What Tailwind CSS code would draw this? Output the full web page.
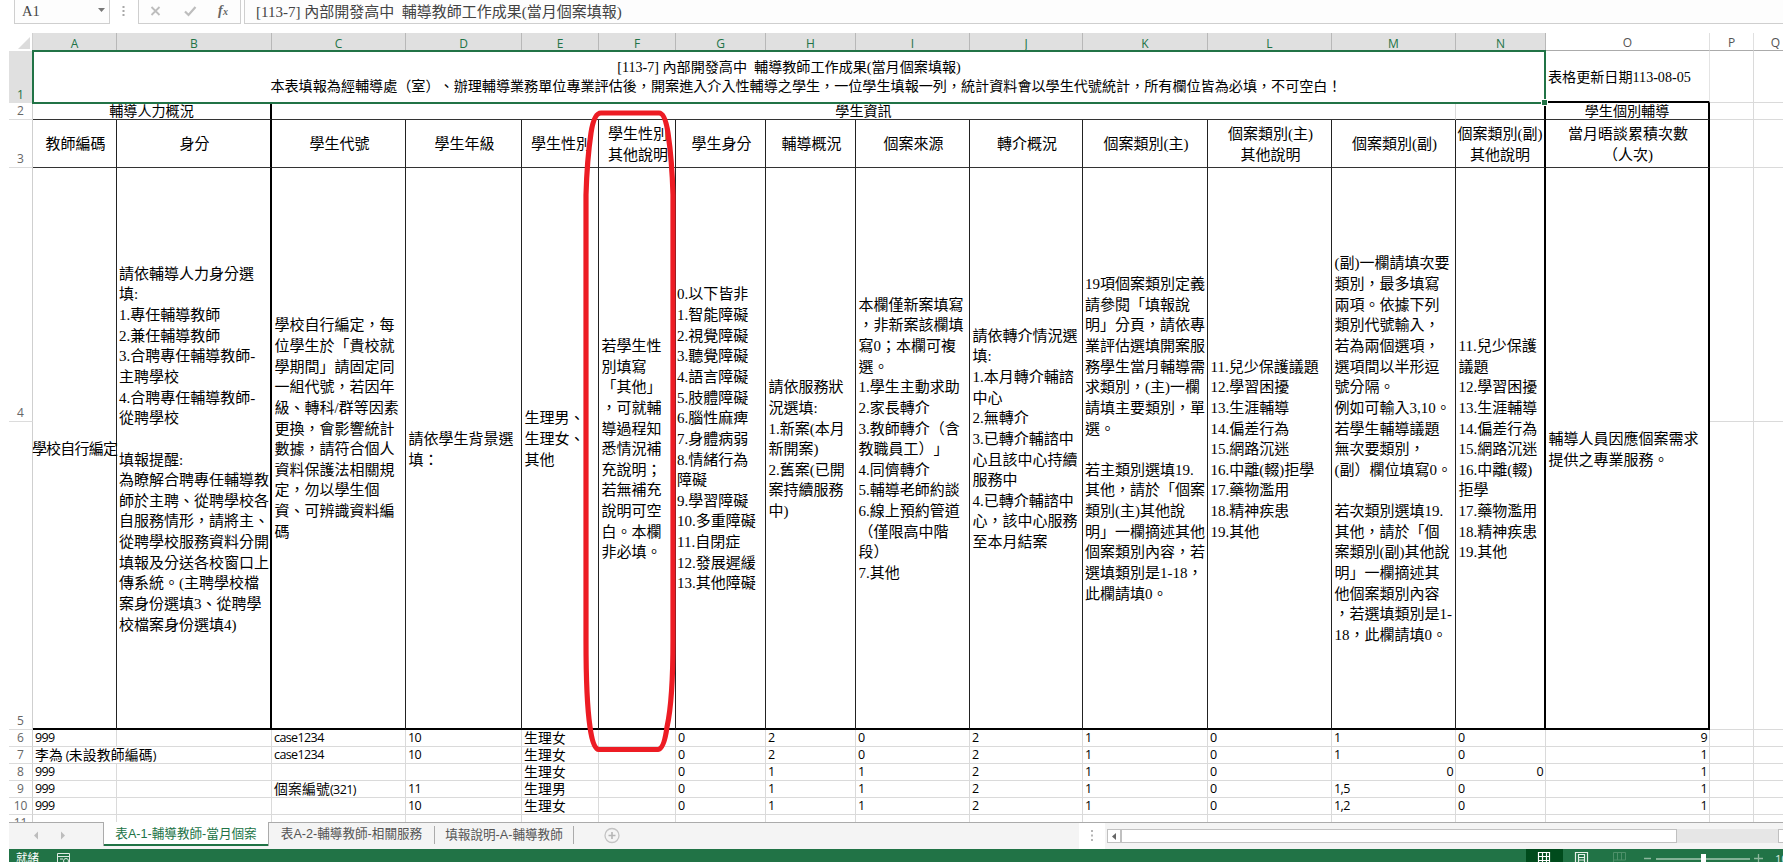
<!DOCTYPE html>
<html lang="zh-Hant">
<head>
<meta charset="utf-8">
<title>輔導教師工作成果</title>
<script src="https://cdn.jsdelivr.net/npm/@tailwindcss/browser@4"></script>
</head>
<body class="w-[1783px] h-[862px] overflow-hidden bg-white">
<div class="relative flex flex-col w-[1783px] h-[862px] overflow-hidden text-black font-['Liberation_Serif','Noto_Sans_CJK_TC',serif] [text-spacing-trim:space-all]">

  <!-- formula bar -->
  <div class="flex h-6 shrink-0 pl-[14px] text-[#444]">
    <div class="flex w-[96px] h-6 items-center justify-between border border-t-0 border-[#cfcfcf] bg-[#fdfdfd] pl-[7px] pr-1">
      <span class="text-[14.5px]">A1</span>
      <svg class="w-[7px] h-[4px] mb-1" viewBox="0 0 7 4"><path d="M0 0h7L3.500 4z" fill="#777"/></svg>
    </div>
    <svg class="w-[28px] h-6" viewBox="0 0 28 24"><path d="M12.500 6h2v2h-2zM12.500 10h2v2h-2zM12.500 14h2v2h-2z" fill="#a8a8a8"/></svg>
    <div class="flex w-[103px] h-6 border border-t-0 border-[#cfcfcf] bg-[#fdfdfd]">
      <svg class="w-[101px] h-[23px]" viewBox="0 0 101 23"><path d="M12.500 7l8 8M20.500 7l-8 8" stroke="#bdbdbd" stroke-width="1.800"/><path d="M46 11.500l3.500 3.500 7-8" fill="none" stroke="#bdbdbd" stroke-width="2.200"/><text x="79" y="15" font-size="14" font-style="italic" font-weight="bold" font-family="Liberation Serif" fill="#666">f</text><text x="84" y="15" font-size="10" font-style="italic" font-weight="bold" font-family="Liberation Serif" fill="#666">x</text></svg>
    </div>
    <div class="ml-[3px] flex flex-1 h-6 items-center border-l border-b border-[#cfcfcf] bg-[#fdfdfd] pl-[11px] pt-px">
      <span class="text-[15px] leading-5 whitespace-pre">[113-7] 內部開發高中  輔導教師工作成果(當月個案填報)</span>
    </div>
  </div>

  <!-- sheet -->
  <div id="sheet" class="mt-[9px] ml-[9px] h-[789px] shrink-0 overflow-hidden flex flex-col"></div>

  <!-- sheet tabs -->
  <div class="ml-[9px] flex h-[27px] shrink-0 border-t border-[#ababab] bg-[#f4f4f4] text-[12.6px] font-['Liberation_Sans','Noto_Sans_CJK_TC',sans-serif] text-[#555]">
    <svg class="w-[94px] h-[26px] shrink-0" viewBox="0 0 94 26"><path d="M29 8.500v8l-4-4zM52 8.500v8l4-4z" fill="#bdbdbd"/></svg>
    <div class="-mt-px flex w-[166px] h-6 shrink-0 justify-center items-center border-l border-r border-[#ababab] bg-white text-[#217346] shadow-[inset_0_-2px_0_#217346]"><span>表A-1-輔導教師-當月個案</span></div>
    <div class="flex w-[165px] h-[22px] shrink-0 justify-center items-center"><span>表A-2-輔導教師-相關服務</span></div>
    <div class="mt-[3px] flex w-[140px] h-[18px] shrink-0 justify-center items-center border-l border-r border-[#ababab]"><span>填報說明-A-輔導教師</span></div>
    <svg class="ml-[29px] w-[18px] h-[26px] shrink-0" viewBox="0 0 18 26"><circle cx="9" cy="12.500" r="7" fill="none" stroke="#c3c3c3" stroke-width="1.300"/><path d="M5.500 12.500h7M9 9v7" stroke="#b5b5b5" stroke-width="1.600"/></svg>
    <div class="ml-[458px] w-[26px] shrink-0 bg-white"><svg class="w-[26px] h-[26px]" viewBox="0 0 26 26"><path d="M12 7h2v2h-2zM12 11.500h2v2h-2zM12 16h2v2h-2z" fill="#b5b5b5"/></svg></div>
    <div class="mt-[6px] ml-[2px] flex w-[690px] h-[14px] shrink-0 bg-[#e6e6e6]">
      <div class="w-[14px] border border-[#c0c0c0] bg-white flex items-center justify-center"><svg class="w-1 h-[7px]" viewBox="0 0 4 7"><path d="M4 0v7L0 3.500z" fill="#666"/></svg></div>
      <div class="w-[556px] border border-[#c0c0c0] bg-white"></div>
      <div class="ml-[101px] flex-1 border border-[#c0c0c0] bg-white"></div>
    </div>
  </div>

  <!-- status bar -->
  <div class="ml-[9px] flex h-[13px] shrink-0 overflow-hidden bg-[#217346] text-white font-['Open_Sans','Noto_Sans_CJK_TC',sans-serif]">
    <span class="ml-[7px] w-[41px] text-[11.500px] leading-[18px]">就緒</span>
    <svg class="w-[14px] h-[13px] shrink-0" viewBox="0 0 14 13"><path d="M.5 14V4.500h12V14M.5 7.500h12M3 10h3" fill="none" stroke="#dfeae3" /><circle cx="9" cy="12" r="2.500" fill="none" stroke="#dfeae3"/></svg>
    <div class="ml-[1455px] w-[37px] shrink-0 bg-[#004b1c]"><svg class="w-[37px] h-[13px]" viewBox="0 0 37 13"><path d="M12.500 14V3.500h11V14M12 7.500h12M12 11.500h12M16.500 3v11M20.500 3v11" fill="none" stroke="#fff" stroke-width="1.200"/></svg></div>
    <svg class="w-[220px] h-[13px] shrink-0" viewBox="0 0 220 13"><path d="M12.500 14V3.500h12V14M15.500 14V5.500h6V14M16 8.500h5M16 11h5" fill="none" stroke="#e5efe8" stroke-width="1.200"/><path d="M50.500 14V3.500h12V11h-12M54.500 3v8M58.500 3v8" fill="none" stroke="#4d9069"/><path d="M81 9.500h7" stroke="#8db79d" stroke-width="1.500"/><path d="M93 10h94" stroke="#a6c7b2" stroke-width="1.500"/><path d="M138 5h5v9h-5z" fill="#fff"/><path d="M191 9.500h9M195.500 5v9" stroke="#8db79d" stroke-width="1.300"/><text x="212" y="14" font-size="11.500" font-family="Open Sans" fill="#dfeae3">100%</text></svg>
  </div>

  <!-- hand-drawn highlight over column F -->
  <svg class="absolute left-[575px] top-[100px] w-[110px] h-[660px]" viewBox="575 100 110 660"><path d="M601 113Q594 113 591 133Q587 160 586 195V640Q586 700 590 727Q593 749 599 749.500H658Q664 749 667 727Q673 700 673 640V195Q672 160 668 133Q665 113 659 113Z" fill="none" stroke="#ed1c24" stroke-width="5.200" stroke-linejoin="round"/></svg>
</div>

<script>
const W = [84,155,134,116,77,77,90,90,114,113,125,124,124,90,164,44,44];
const L = 'ABCDEFGHIJKLMNOPQ';
const cell = (w, cls, html) => `<div class="shrink-0 ${cls}" style="width:${w}px">${html}</div>`;
const row = (h, head, cells) => `<div class="flex shrink-0" style="height:${h}px">${head}${cells}</div>`;
const num = (n, cls) => `<div class="w-6 shrink-0 flex items-end justify-center border-r font-['Open_Sans',sans-serif] text-[12px] leading-[17px] ${cls}">${n}</div>`;
const plainNum = 'border-[#cfcfcf] border-b border-b-[#dcdcdc] text-[#666]';
const grid = 'border-r border-b border-[#dadada]';
let out = '';

// column letters
out += row(18, `<div class="w-6 shrink-0 border-r border-[#d0d0d0]"><svg class="w-[23px] h-[18px]" viewBox="0 0 23 18"><path d="M21 4v12H9z" fill="#dcdcdc"/></svg></div>`,
  W.map((w, i) => cell(w, "flex items-center justify-center border-r font-['Open_Sans',sans-serif] text-[12px] leading-4 pt-[3px] " +
    (i < 14 ? 'bg-[#e0e0e0] text-[#217346] border-[#b8b8b8]' : 'text-[#555] border-[#e0e0e0] border-b border-b-[#ababab]'), L[i])).join(''));

// row 1: merged title
out += row(52, num(1, 'bg-[#e0e0e0] border-[#217346] text-[#217346]'),
  cell(1514, 'relative z-10 -mt-px h-[54px] -ml-px border-2 border-[#217346] text-[14.100px] leading-[19.500px] text-center flex flex-col justify-center whitespace-pre',
    `<div>[113-7] 內部開發高中  輔導教師工作成果(當月個案填報)</div><div class="pl-[34px]">本表填報為經輔導處（室）、辦理輔導業務單位專業評估後，開案進入介入性輔導之學生，一位學生填報一列，統計資料會以學生代號統計，所有欄位皆為必填，不可空白！</div><div class="absolute -right-[3px] -bottom-[3px] size-[5px] bg-[#217346] outline outline-1 outline-white"></div>`) +
  cell(164, 'flex items-center pl-[2px] pt-[4px] text-[14.100px] border-r border-[#e4e4e4] border-b-2 border-b-black', '表格更新日期113-08-05') +
  cell(44, grid, '') + cell(44, grid, ''));

// row 2: group headings
const grp = 'flex items-center justify-center text-[14.100px] leading-[15px] border-b border-b-[#333]';
out += row(17, num(2, plainNum),
  cell(239, grp + ' border-r-2 border-r-black', '輔導人力概況') +
  cell(1184, grp + ' border-r border-r-[#dadada]', '學生資訊') +
  cell(90, grp + ' border-r-2 border-r-black', '') +
  cell(164, grp + ' border-r-2 border-r-black', '學生個別輔導') + cell(44, grid, '') + cell(44, grid, ''));

// row 3: column headings
const line = i => (i === 1 || i === 13 || i === 14) ? 'border-r-2 border-r-black' : 'border-r border-r-[#222]';
const H = ['教師編碼','身分','學生代號','學生年級','學生性別','學生性別\n其他說明','學生身分','輔導概況','個案來源','轉介概況','個案類別(主)','個案類別(主)\n其他說明','個案類別(副)','個案類別(副)\n其他說明','當月晤談累積次數\n（人次)'];
out += row(48, num(3, plainNum), H.map((t, i) =>
  cell(W[i], 'flex items-center justify-center text-center whitespace-pre text-[15px] leading-[21px] pt-[2px] border-b border-b-[#333] ' + (i === 13 ? '' : 'pl-[2px] ') + line(i), `<div>${t}</div>`)).join('') +
  cell(44, grid, '') + cell(44, grid, ''));

// rows 4-5: merged instructions; trailing blank lines are part of the cell values
const T = ['學校自行編定',
'請依輔導人力身分選\n填:\n1.專任輔導教師\n2.兼任輔導教師\n3.合聘專任輔導教師-\n主聘學校\n4.合聘專任輔導教師-\n從聘學校\n\n填報提醒:\n為瞭解合聘專任輔導教\n師於主聘、從聘學校各\n自服務情形，請將主、\n從聘學校服務資料分開\n填報及分送各校窗口上\n傳系統。(主聘學校檔\n案身份選填3、從聘學\n校檔案身份選填4)',
'學校自行編定，每\n位學生於「貴校就\n學期間」請固定同\n一組代號，若因年\n級、轉科/群等因素\n更換，會影響統計\n數據，請符合個人\n資料保護法相關規\n定，勿以學生個\n資、可辨識資料編\n碼\n&nbsp;\n&nbsp;',
'請依學生背景選\n填：',
'生理男、\n生理女、\n其他\n&nbsp;',
'若學生性\n別填寫\n「其他」\n，可就輔\n導過程知\n悉情況補\n充說明；\n若無補充\n說明可空\n白。本欄\n非必填。',
'0.以下皆非\n1.智能障礙\n2.視覺障礙\n3.聽覺障礙\n4.語言障礙\n5.肢體障礙\n6.腦性麻痺\n7.身體病弱\n8.情緒行為\n障礙\n9.學習障礙\n10.多重障礙\n11.自閉症\n12.發展遲緩\n13.其他障礙\n&nbsp;',
'請依服務狀\n況選填:\n1.新案(本月\n新開案)\n2.舊案(已開\n案持續服務\n中)',
'本欄僅新案填寫\n，非新案該欄填\n寫0；本欄可複\n選。\n1.學生主動求助\n2.家長轉介\n3.教師轉介（含\n教職員工）」\n4.同儕轉介\n5.輔導老師約談\n6.線上預約管道\n（僅限高中階\n段）\n7.其他\n&nbsp;',
'請依轉介情況選\n填:\n1.本月轉介輔諮\n中心\n2.無轉介\n3.已轉介輔諮中\n心且該中心持續\n服務中\n4.已轉介輔諮中\n心，該中心服務\n至本月結案\n&nbsp;',
'19項個案類別定義\n請參閱「填報說\n明」分頁，請依專\n業評估選填開案服\n務學生當月輔導需\n求類別，(主)一欄\n請填主要類別，單\n選。\n\n若主類別選填19.\n其他，請於「個案\n類別(主)其他說\n明」一欄摘述其他\n個案類別內容，若\n選填類別是1-18，\n此欄請填0。\n&nbsp;',
'11.兒少保護議題\n12.學習困擾\n13.生涯輔導\n14.偏差行為\n15.網路沉迷\n16.中離(輟)拒學\n17.藥物濫用\n18.精神疾患\n19.其他',
'(副)一欄請填次要\n類別，最多填寫\n兩項。依據下列\n類別代號輸入，\n若為兩個選項，\n選項間以半形逗\n號分隔。\n例如可輸入3,10。\n若學生輔導議題\n無次要類別，\n(副）欄位填寫0。\n\n若次類別選填19.\n其他，請於「個\n案類別(副)其他說\n明」一欄摘述其\n他個案類別內容\n，若選填類別是1-\n18，此欄請填0。',
'11.兒少保護\n議題\n12.學習困擾\n13.生涯輔導\n14.偏差行為\n15.網路沉迷\n16.中離(輟)\n拒學\n17.藥物濫用\n18.精神疾患\n19.其他',
'輔導人員因應個案需求\n提供之專業服務。'];
const split = `<div class="h-[254px] border-b border-[#dadada]"></div>`;
out += row(562, `<div class="flex flex-col shrink-0">${num(4, plainNum + ' h-[254px]')}${num(5, plainNum + ' h-[308px]')}</div>`,
  T.map((t, i) => cell(W[i], 'flex items-center whitespace-pre text-[15px] leading-[20.650px] pt-[3px] border-b-2 border-b-black ' + (i === 0 ? 'justify-center tracking-[-0.800px] ' : i === 6 ? 'pl-px ' : (i === 1 || i === 10) ? 'pl-[2px] ' : 'pl-[2.500px] ') + line(i), `<div>${t}</div>`)).join('') +
  cell(44, grid, split) + cell(44, grid, split));

// data rows
const D = [
 ['999','','case1234','10','生理女','','0','2','0','2','1','0','1','0','9'],
 ['李為 (未設教師編碼)','','case1234','10','生理女','','0','2','0','2','1','0','1','0','1'],
 ['999','','','','生理女','','0','1','1','2','1','0','0','0','1'],
 ['999','','個案編號(321)','11','生理男','','0','1','1','2','1','0','1,5','0','1'],
 ['999','','','10','生理女','','0','1','1','2','1','0','1,2','0','1'],
 []];
const cjk = s => s.replace(/[\u4e00-\u9fff]+/g, m => `<span class="text-[13.800px] tracking-[0.200px]">${m}</span>`);
D.forEach((r, k) => {
  out += row(17, num(k + 6, plainNum), W.map((w, i) => {
    const right = i === 14 || (k === 2 && (i === 12 || i === 13));
    const spill = k === 1 && i === 0;
    return cell(w, "whitespace-nowrap font-['Open_Sans','Noto_Sans_CJK_TC',sans-serif] text-[12.500px] tracking-[-0.600px] leading-[15px] border-b border-[#dadada] px-[2px] " +
      (spill ? '' : 'border-r ') + (right ? 'text-right' : ''), cjk(r[i] || ''));
  }).join(''));
});
document.getElementById('sheet').innerHTML = out;
</script>
</body>
</html>
